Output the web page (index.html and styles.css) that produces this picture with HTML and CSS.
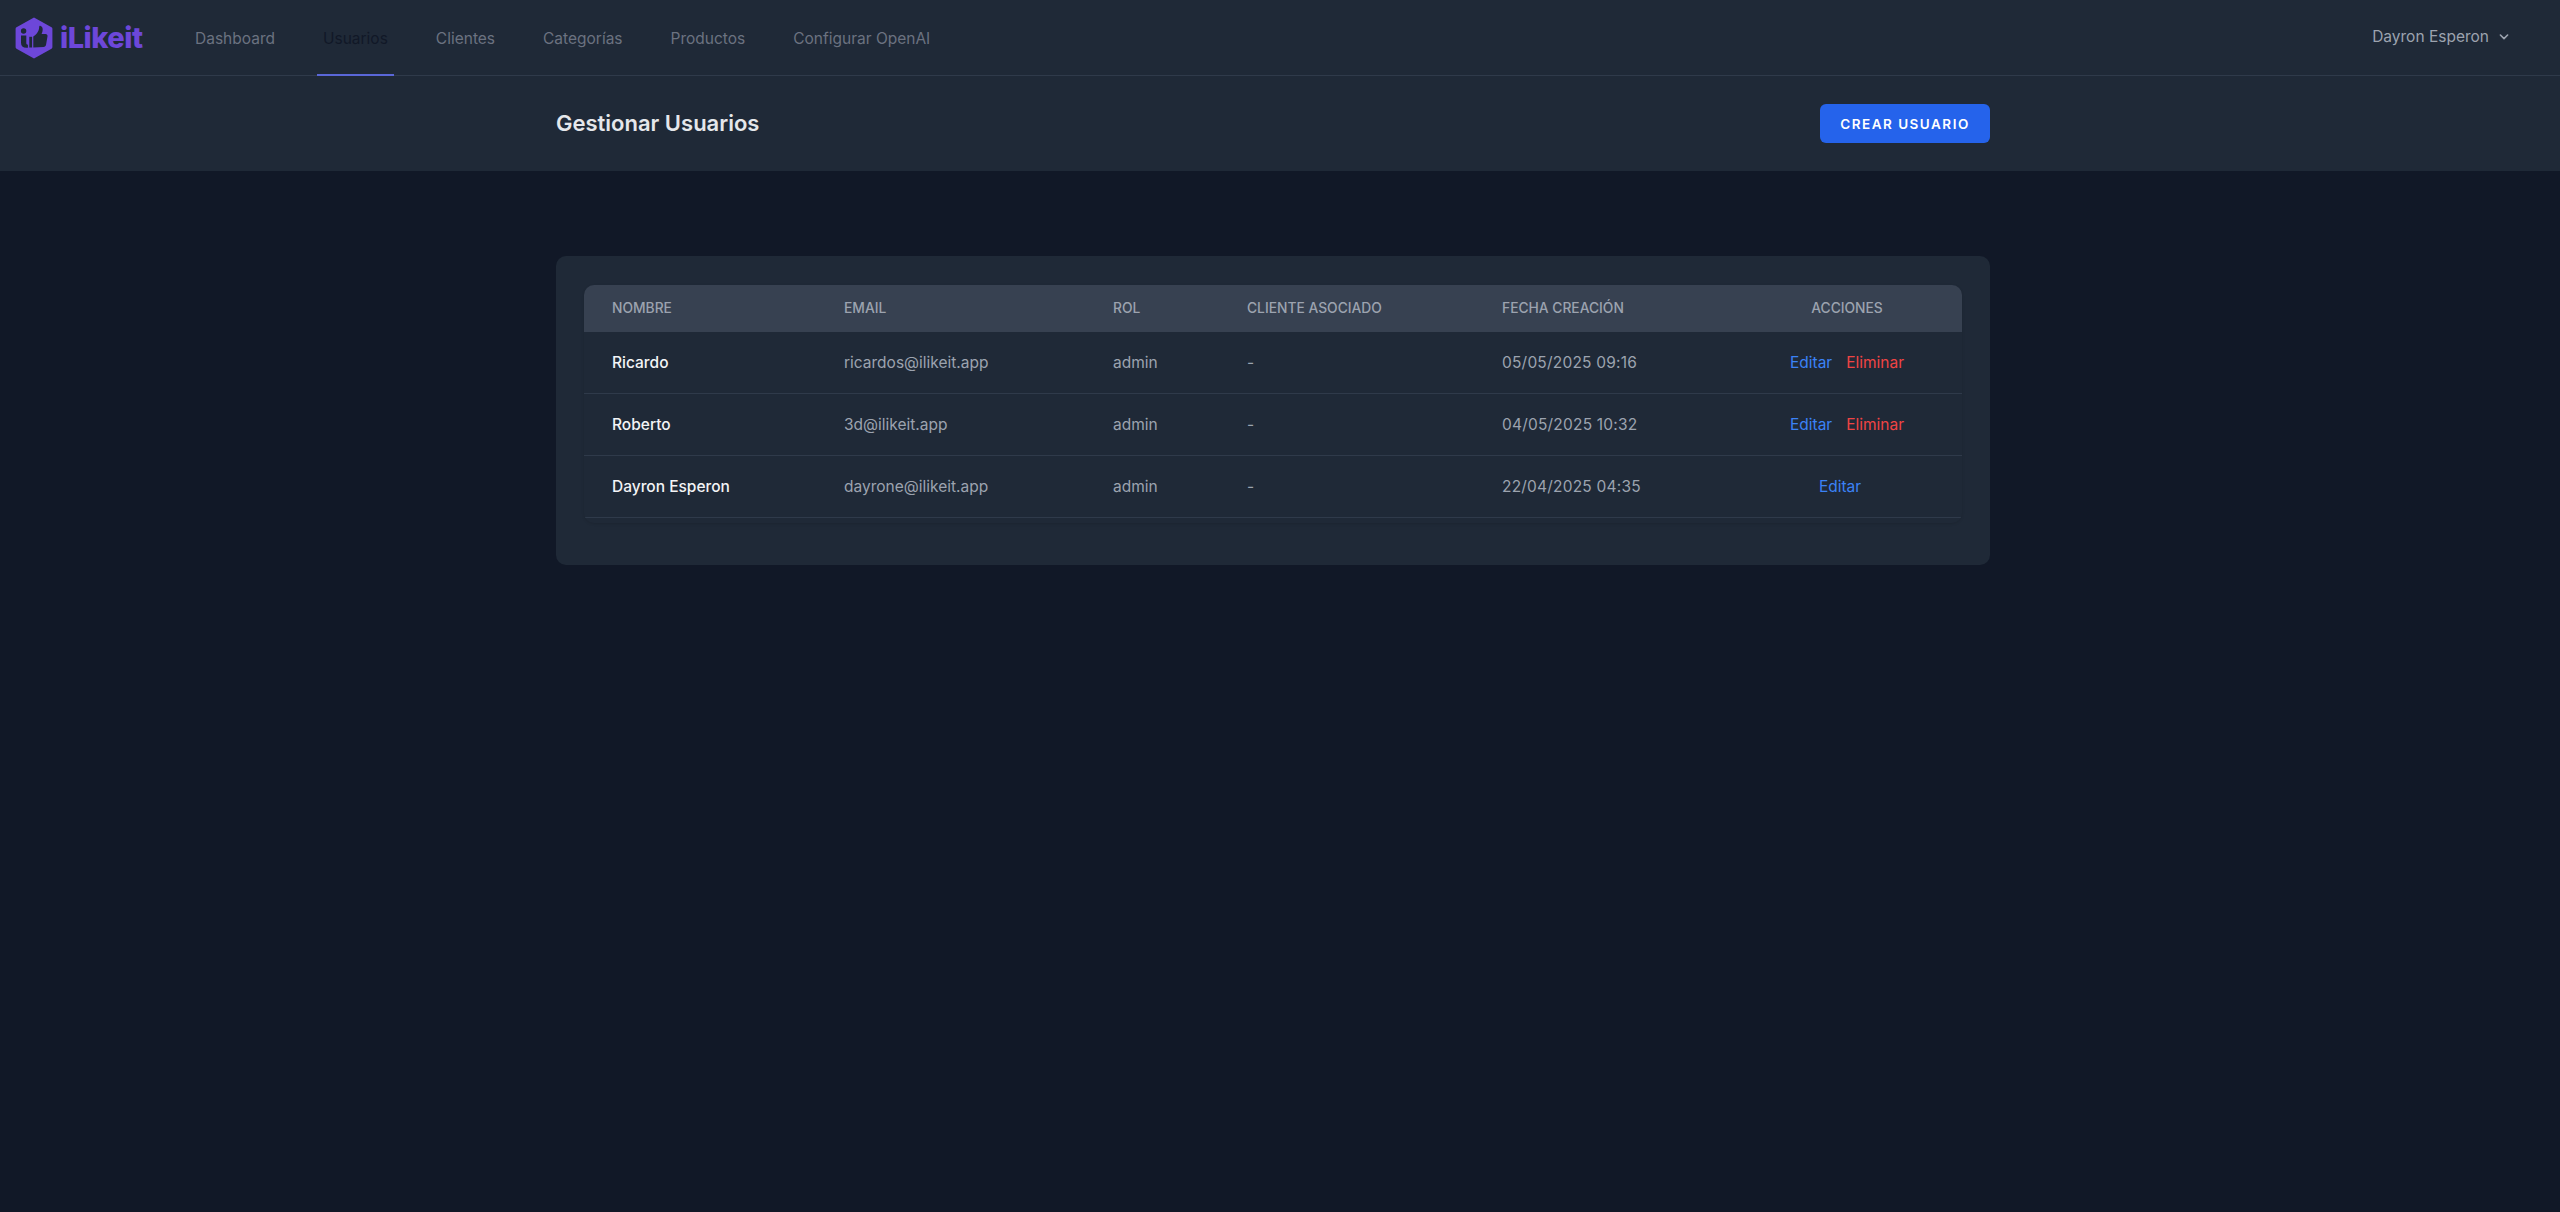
FILE: index.html
```html
<!DOCTYPE html>
<html lang="es">
<head>
    <meta charset="UTF-8">
    <meta name="viewport" content="width=device-width, initial-scale=1.0">
    <title>Gestionar Usuarios - iLikeit</title>
    <link rel="stylesheet" href="styles.css">
</head>
<body>
    <nav class="topbar">
        <a class="logo" href="#">
            <svg class="logo-mark" viewBox="0 0 38 42" aria-hidden="true">
                <path class="logo-hex" d="M19 0.500 36.500 10.300a1.600 1.600 0 0 1 .9 1.400V30.300a1.600 1.600 0 0 1-.9 1.400L19 41.500 1.500 31.700a1.600 1.600 0 0 1-.9-1.400V11.700a1.600 1.600 0 0 1 .9-1.400Z"/>
                <circle class="logo-cut" cx="8.600" cy="14" r="2.700"/>
                <path class="logo-cut" d="M6 18.500h5.300v7.500c0 1.200.5 1.700 1.600 1.700v3h-1.400c-3.700 0-5.500-1.700-5.500-5Z"/>
                <path class="logo-cut" d="M14.300 19.800h2.800v10.700h-2.800Z"/>
                <path class="logo-cut" d="M18.300 30.500V19.600c2.500-1.800 4.400-4 5.300-6.400.4-1.100.6-2.200.6-3.200 0-.8.600-1.300 1.300-1.100 1.500.4 2.300 1.900 2.200 3.800-.1 1.400-.5 2.900-1.100 4.300h4c1.300 0 2.100 1 1.900 2.200l-1.400 8.400c-.2 1.400-1.200 2.300-2.600 2.300Z"/>
            </svg>
            <span class="logo-text">iLikeit</span>
        </a>
        <div class="nav-links">
            <a href="#">Dashboard</a>
            <a href="#" class="active">Usuarios</a>
            <a href="#">Clientes</a>
            <a href="#">Categorías</a>
            <a href="#">Productos</a>
            <a href="#">Configurar OpenAI</a>
        </div>
        <button class="user-menu">
            Dayron Esperon
            <svg viewBox="0 0 20 20" aria-hidden="true"><path d="M5.500 7.500 10 12l4.500-4.500"/></svg>
        </button>
    </nav>

    <header class="page-header">
        <div class="wrap page-header-row">
            <h1>Gestionar Usuarios</h1>
            <a href="#" class="btn-primary">Crear Usuario</a>
        </div>
    </header>

    <main class="wrap content">
        <section class="card">
            <div class="table-box">
                <table>
                    <colgroup>
                        <col class="col-name">
                        <col class="col-email">
                        <col class="col-role">
                        <col class="col-client">
                        <col class="col-date">
                        <col class="col-actions">
                    </colgroup>
                    <thead>
                        <tr>
                            <th>Nombre</th>
                            <th>Email</th>
                            <th>Rol</th>
                            <th>Cliente Asociado</th>
                            <th>Fecha Creación</th>
                            <th class="center">Acciones</th>
                        </tr>
                    </thead>
                    <tbody>
                        <tr>
                            <td class="name">Ricardo</td>
                            <td>ricardos@ilikeit.app</td>
                            <td>admin</td>
                            <td>-</td>
                            <td class="date">05/05/2025 09:16</td>
                            <td class="center"><a href="#" class="edit">Editar</a><a href="#" class="remove">Eliminar</a></td>
                        </tr>
                        <tr>
                            <td class="name">Roberto</td>
                            <td>3d@ilikeit.app</td>
                            <td>admin</td>
                            <td>-</td>
                            <td class="date">04/05/2025 10:32</td>
                            <td class="center"><a href="#" class="edit">Editar</a><a href="#" class="remove">Eliminar</a></td>
                        </tr>
                        <tr>
                            <td class="name">Dayron Esperon</td>
                            <td>dayrone@ilikeit.app</td>
                            <td>admin</td>
                            <td>-</td>
                            <td class="date">22/04/2025 04:35</td>
                            <td class="center"><a href="#" class="edit">Editar</a></td>
                        </tr>
                    </tbody>
                </table>
            </div>
        </section>
    </main>
</body>
</html>
```

FILE: styles.css
```css
* {
    box-sizing: border-box;
}

body {
    margin: 0;
    background-color: #111827;
    color: #9ca3af;
    font-family: Inter, "Noto Sans", sans-serif;
    font-size: 15.5px;
}

a {
    text-decoration: none;
}

.topbar {
    display: flex;
    align-items: stretch;
    height: 76px;
    padding: 0 48px 0 15px;
    background-color: #1f2937;
    border-bottom: 1px solid #2f3a4a;
}

.logo {
    display: flex;
    align-items: center;
    gap: 7px;
    width: 174px;
    color: #6d47d9;
}

.logo-mark {
    width: 38px;
    height: 42px;
}

.logo-hex {
    fill: #6d47d9;
}

.logo-cut {
    fill: #1f2937;
}

.logo-text {
    font-size: 29px;
    font-weight: 800;
    letter-spacing: -0.5px;
}

.nav-links {
    display: flex;
    gap: 36px;
    flex: 1;
    height: 76px;
}

.nav-links a {
    display: flex;
    align-items: center;
    padding: 3px 6px 0;
    color: #6b7280;
    border-bottom: 2px solid transparent;
}

.nav-links a.active {
    color: #111827;
    border-bottom-color: #5a67d8;
}

.user-menu {
    display: flex;
    align-items: center;
    gap: 7px;
    padding: 0 0 2px;
    background: none;
    border: none;
    color: #9ca3af;
    font: inherit;
}

.user-menu svg {
    width: 16px;
    height: 16px;
    fill: none;
    stroke: currentColor;
    stroke-width: 2;
    stroke-linecap: round;
    stroke-linejoin: round;
}

.wrap {
    width: 1434px;
    margin-left: 556px;
}

.page-header {
    height: 95px;
    background-color: #1f2937;
}

.page-header-row {
    display: flex;
    align-items: center;
    justify-content: space-between;
    height: 100%;
}

h1 {
    margin: 0;
    padding-bottom: 2px;
    color: #e5e7eb;
    font-size: 22px;
    font-weight: 600;
}

.btn-primary {
    display: flex;
    align-items: center;
    justify-content: center;
    width: 170px;
    height: 39px;
    background-color: #2563eb;
    border-radius: 6px;
    color: #fff;
    font-size: 13.5px;
    font-weight: 600;
    letter-spacing: 1.500px;
    text-transform: uppercase;
}

.content {
    padding-top: 85px;
}

.card {
    height: 309px;
    padding: 29px 28px 0;
    background-color: #1f2937;
    border-radius: 10px;
}

.table-box {
    height: 238px;
    border-radius: 10px;
    box-shadow: 0 1px 3px rgba(0, 0, 0, 0.12);
    overflow: hidden;
}

table {
    width: 100%;
    border-collapse: separate;
    border-spacing: 0;
    table-layout: fixed;
}

.col-name { width: 232px; }
.col-email { width: 269px; }
.col-role { width: 134px; }
.col-client { width: 255px; }
.col-date { width: 258px; }
.col-actions { width: 230px; }

th {
    height: 47px;
    padding: 0 28px 2px;
    background-color: #374151;
    color: #9ca3af;
    font-size: 13.8px;
    font-weight: 500;
    text-align: left;
    text-transform: uppercase;
}

td {
    height: 62px;
    padding: 0 28px;
    border-bottom: 1px solid #2f3a4a;
}

th.center,
td.center {
    text-align: center;
}

td.name {
    color: #f3f4f6;
    font-weight: 500;
}

td.date {
    letter-spacing: 0.2px;
}

.edit {
    color: #3b82f6;
    margin-right: 14px;
}

.remove {
    color: #ef4444;
}
```
